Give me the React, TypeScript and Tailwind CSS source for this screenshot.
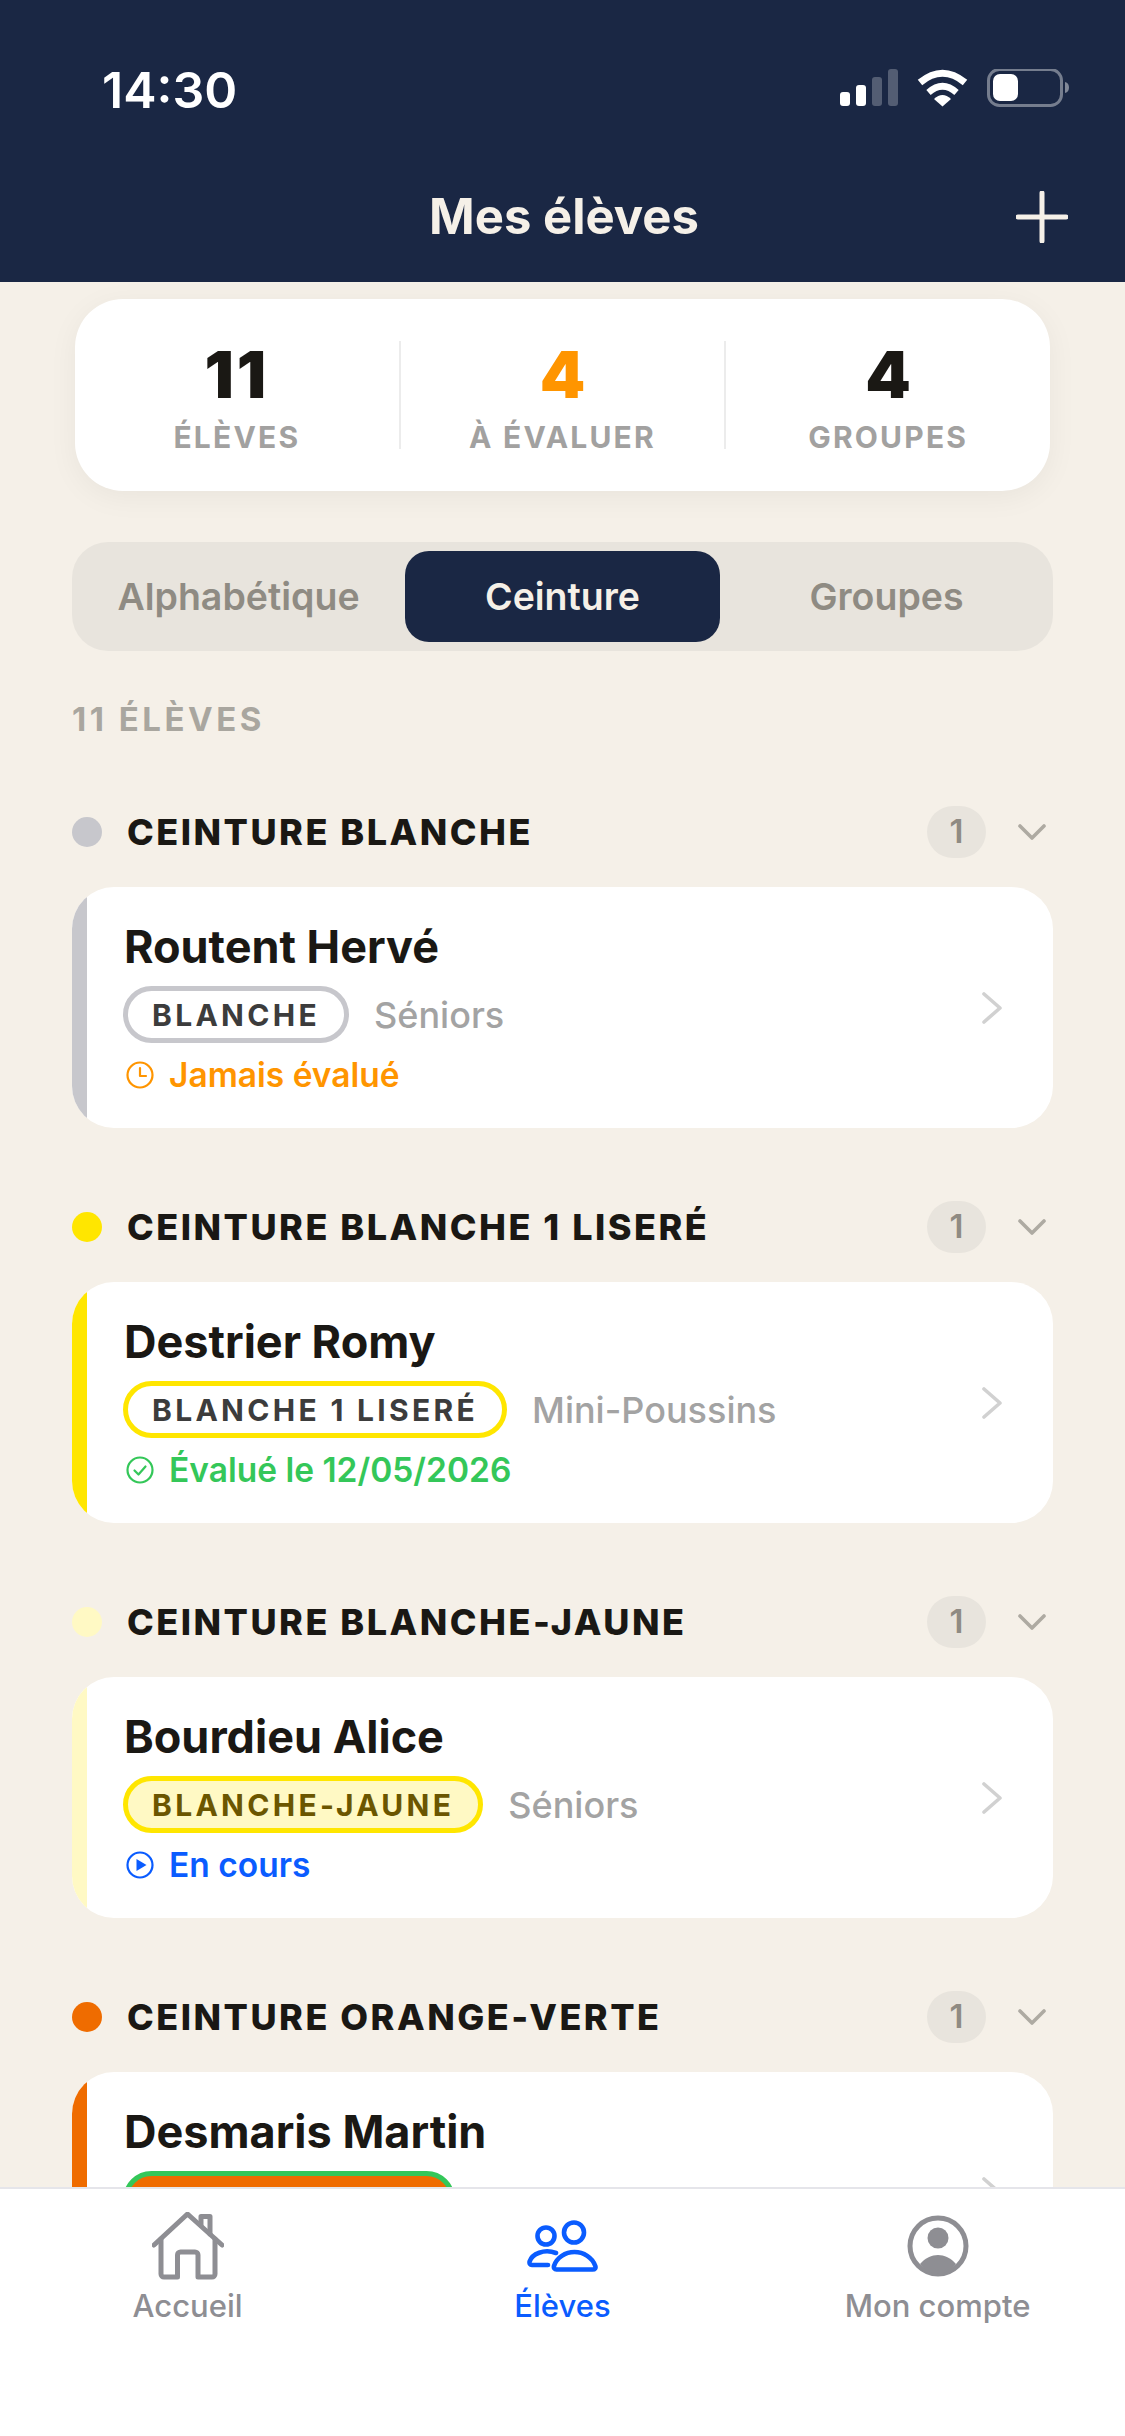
const groups = [
  {
    title: "CEINTURE BLANCHE",
    color: "bg-[#c7c7cc]",
    name: "Routent Hervé",
    belt: "BLANCHE",
    beltClass: "border-[#c7c7cc] bg-white text-[#3c3c3c]",
    team: "Séniors",
    status: "Jamais évalué",
    statusClass: "text-[#ff9500]",
    icon: "clock",
  },
  {
    title: "CEINTURE BLANCHE 1 LISERÉ",
    color: "bg-[#ffe600]",
    name: "Destrier Romy",
    belt: "BLANCHE 1 LISERÉ",
    beltClass: "border-[#ffe600] bg-white text-[#3c3c3c]",
    team: "Mini-Poussins",
    status: "Évalué le 12/05/2026",
    statusClass: "text-[#34c759]",
    icon: "check",
  },
  {
    title: "CEINTURE BLANCHE-JAUNE",
    color: "bg-[#fff9c4]",
    name: "Bourdieu Alice",
    belt: "BLANCHE-JAUNE",
    beltClass: "border-[#ffe600] bg-[#fff9c4] text-[#6b5600]",
    team: "Séniors",
    status: "En cours",
    statusClass: "text-[#0a5cff]",
    icon: "play",
  },
  {
    // the tab bar covers this card from the belt pill downwards
    title: "CEINTURE ORANGE-VERTE",
    color: "bg-[#ef6c00]",
    name: "Desmaris Martin",
    belt: "",
    beltClass: "w-[332px] border-[#34c759] bg-[#ef6c00] text-white",
    team: "",
    status: "",
    statusClass: "",
    icon: "",
  },
];

function StatusIcon({ kind }: { kind: string }) {
  return (
    <svg width="28" height="28" viewBox="0 0 28 28" fill="none" stroke="currentColor" strokeWidth="2.2" strokeLinecap="round" strokeLinejoin="round">
      <circle cx="14" cy="14" r="12.5" />
      {kind === "clock" && <path d="M14 7v8h6" />}
      {kind === "check" && <path d="M8.5 14.5l4 4 7-8" />}
      {kind === "play" && <path d="M10.5 8l10 6-10 6z" fill="currentColor" stroke="none" />}
    </svg>
  );
}

function StatusBar() {
  return (
    <div className="flex h-[107px] items-end justify-between pl-[102px] pr-[56px]">
      <span className="text-[50px] leading-[50px] font-semibold text-white -mb-[8px]">14:30</span>
      <svg width="229" height="38" viewBox="0 0 229 38" fill="none">
        <g fill="#fff">
          <rect x="0" y="23" width="10" height="14" rx="3" />
          <rect x="16" y="16" width="10" height="21" rx="3" />
          <rect x="32" y="8" width="10" height="29" rx="3" opacity=".25" />
          <rect x="48" y="0" width="10" height="37" rx="3" opacity=".25" />
        </g>
        <g transform="translate(77 0)">
          <path d="M3 13.5Q25.5-5 48 13.5" stroke="#fff" strokeWidth="7" />
          <path d="M11.5 23.5Q25.5 11 39.5 23.5" stroke="#fff" strokeWidth="6.5" />
          <path d="M17 30Q25.5 22 34 30L25.5 37.5Z" fill="#fff" />
        </g>
        <rect x="148.5" y="0.5" width="73" height="36" rx="11" stroke="#fff" strokeOpacity=".4" strokeWidth="3" />
        <rect x="153" y="5" width="25" height="27" rx="7" fill="#fff" />
        <path d="M225 13c3 .5 4 3 4 5.500s-1 5-4 5.500z" fill="#fff" fillOpacity=".45" />
      </svg>
    </div>
  );
}

function Stat({ value, label, tone }: { value: string; label: string; tone: string }) {
  return (
    <div className="flex flex-1 flex-col items-center pt-[6px]">
      <span className={`text-[65px] leading-[66px] font-black ${tone}`}>{value}</span>
      <span className="mt-[11px] text-[30px] leading-[36px] font-bold tracking-[2.2px] text-[#a2a1a0]">{label}</span>
    </div>
  );
}

function GroupCard({ group }: { group: (typeof groups)[number] }) {
  return (
    <section className="mb-[71px]">
      <div className="flex h-[56px] items-center">
        <span className={`h-[30px] w-[30px] rounded-full ${group.color}`} />
        <h2 className="ml-[25px] flex-1 text-[36px] leading-[44px] font-extrabold tracking-[2.5px] text-[#1a1814]">{group.title}</h2>
        <span className="flex h-[52px] w-[59px] items-center justify-center rounded-full bg-[#e8e4dd] text-[33px] font-semibold text-[#8f8b83]">1</span>
        <svg className="ml-[32px] mr-[7px]" width="28" height="16" viewBox="0 0 28 16" fill="none" stroke="#aeaaa2" strokeWidth="3.6" strokeLinecap="round" strokeLinejoin="round">
          <path d="M2 2l12 12L26 2" />
        </svg>
      </div>
      <div className="mt-[27px] flex h-[241px] overflow-hidden rounded-[42px] bg-white">
        <div className={`w-[15px] shrink-0 ${group.color}`} />
        <div className="flex flex-1 flex-col pl-[36px] pt-[33px]">
          <div className="ml-[1px] text-[45px] leading-[54px] font-bold text-[#1a1814]">{group.name}</div>
          <div className="mt-[12px] flex items-center">
            <span className={`flex h-[57px] items-center rounded-full border-[5px] px-[24px] text-[30px] leading-none font-bold tracking-[3.3px] ${group.beltClass}`}>{group.belt}</span>
            <span className="ml-[25px] text-[36px] font-medium text-[#a3a3a3]">{group.team}</span>
          </div>
          <div className={`mt-[12px] flex h-[40px] items-center gap-[15px] pl-[3px] text-[33.5px] font-semibold ${group.statusClass}`}>
            {group.icon && <StatusIcon kind={group.icon} />}
            <span>{group.status}</span>
          </div>
        </div>
        <div className="flex items-center pr-[51px]">
          <svg width="20" height="32" viewBox="0 0 20 32" fill="none" stroke="#d1d1d1" strokeWidth="3.6" strokeLinecap="round" strokeLinejoin="round">
            <path d="M2 2l16 14L2 30" />
          </svg>
        </div>
      </div>
    </section>
  );
}

export default function App() {
  return (
    <div className="flex h-[2436px] w-[1125px] flex-col overflow-hidden bg-[#f5f0e8] font-['Inter',sans-serif]">
      <header className="h-[282px] shrink-0 bg-[#1a2744]">
        <StatusBar />
        <div className="mt-[81px] grid grid-cols-[1fr_auto_1fr] items-center pl-[60px] pr-[57px]">
          <span />
          <h1 className="text-[49px] leading-[58px] font-bold text-[#f5f0e8]">Mes élèves</h1>
          <svg className="justify-self-end" width="52" height="52" viewBox="0 0 52 52" fill="none" stroke="#f5f0e8" strokeWidth="5" strokeLinecap="round">
            <path d="M26 2v48M2 26h48" />
          </svg>
        </div>
      </header>

      <main className="min-h-0 flex-1 overflow-hidden px-[72px] pt-[17px]">
        <div className="mx-[3px] flex h-[192px] items-center rounded-[48px] bg-white shadow-[0_6px_30px_rgba(0,0,0,0.05)]">
          <Stat value="11" label="ÉLÈVES" tone="tracking-[3px] text-[#1a1814]" />
          <div className="h-[108px] w-[2px] bg-[#ececec]" />
          <Stat value="4" label="À ÉVALUER" tone="text-[#ff9500]" />
          <div className="h-[108px] w-[2px] bg-[#ececec]" />
          <Stat value="4" label="GROUPES" tone="text-[#1a1814]" />
        </div>

        <div className="mt-[51px] flex h-[109px] items-center gap-[9px] rounded-[36px] bg-[#e8e4dd] p-[9px] text-[37.5px] font-semibold text-[#8f8b83]">
          <div className="flex-1 pt-[2px] text-center">Alphabétique</div>
          <div className="flex h-[91px] flex-1 items-center justify-center rounded-[24px] bg-[#1a2744] pt-[2px] text-[#f5f0e8]">Ceinture</div>
          <div className="flex-1 pt-[2px] text-center">Groupes</div>
        </div>

        <div className="mt-[48px] mb-[65px] text-[33px] leading-[40px] font-bold tracking-[3.5px] text-[#a9a69f]">11 ÉLÈVES</div>

        {groups.map((group) => (
          <GroupCard key={group.title} group={group} />
        ))}
      </main>

      <nav className="relative z-10 grid h-[249px] shrink-0 grid-cols-3 border-t-2 border-[#e5e5ea] bg-white text-[31px] font-medium text-[#8e8e93]">
        <div className="flex flex-col items-center pt-[23px]">
          <div className="flex h-[68px] items-center">
            <svg width="72" height="68" viewBox="0 0 72 68" fill="none" stroke="currentColor" strokeWidth="5" strokeLinecap="round" strokeLinejoin="round">
              <path d="M2 33L35.500 2 70 33" />
              <path d="M49 13V4.500h9V22" />
              <path d="M9 27V62a3 3 0 0 0 3 3H25.500V43a3 3 0 0 1 3-3h14.500a3 3 0 0 1 3 3V65H60a3 3 0 0 0 3-3V27" />
            </svg>
          </div>
          <span className="mt-[3px]">Accueil</span>
        </div>
        <div className="flex flex-col items-center pt-[23px] text-[#0a5cff]">
          <div className="flex h-[68px] items-center">
            <svg width="71" height="52" viewBox="0 0 71 52" fill="none" stroke="currentColor" strokeWidth="4.6" strokeLinecap="round" strokeLinejoin="round">
              <circle cx="19" cy="16" r="8.500" />
              <circle cx="47" cy="12.500" r="10" />
              <path d="M29 33C17 28.500 5 34 2.600 41.500 2.200 43.500 3 45 5 45H21" />
              <path d="M29.500 49.500H65.500C68 49.500 69 48 68.300 46 65.500 37.500 56.500 32 47.500 32 38.500 32 29.500 37.500 27 46 26.500 48 27.500 49.500 29.500 49.500Z" />
            </svg>
          </div>
          <span className="mt-[3px]">Élèves</span>
        </div>
        <div className="flex flex-col items-center pt-[23px]">
          <div className="flex h-[68px] items-center">
            <svg width="62" height="62" viewBox="0 0 62 62" fill="none">
              <circle cx="31" cy="31" r="28" stroke="currentColor" strokeWidth="5" />
              <circle cx="31" cy="23" r="10.500" fill="currentColor" />
              <path d="M13 49C18 43 25 40 31 40S44 43 49 49C44 55 38 59 31 59S18 55 13 49Z" fill="currentColor" />
            </svg>
          </div>
          <span className="mt-[3px]">Mon compte</span>
        </div>
      </nav>
    </div>
  );
}
